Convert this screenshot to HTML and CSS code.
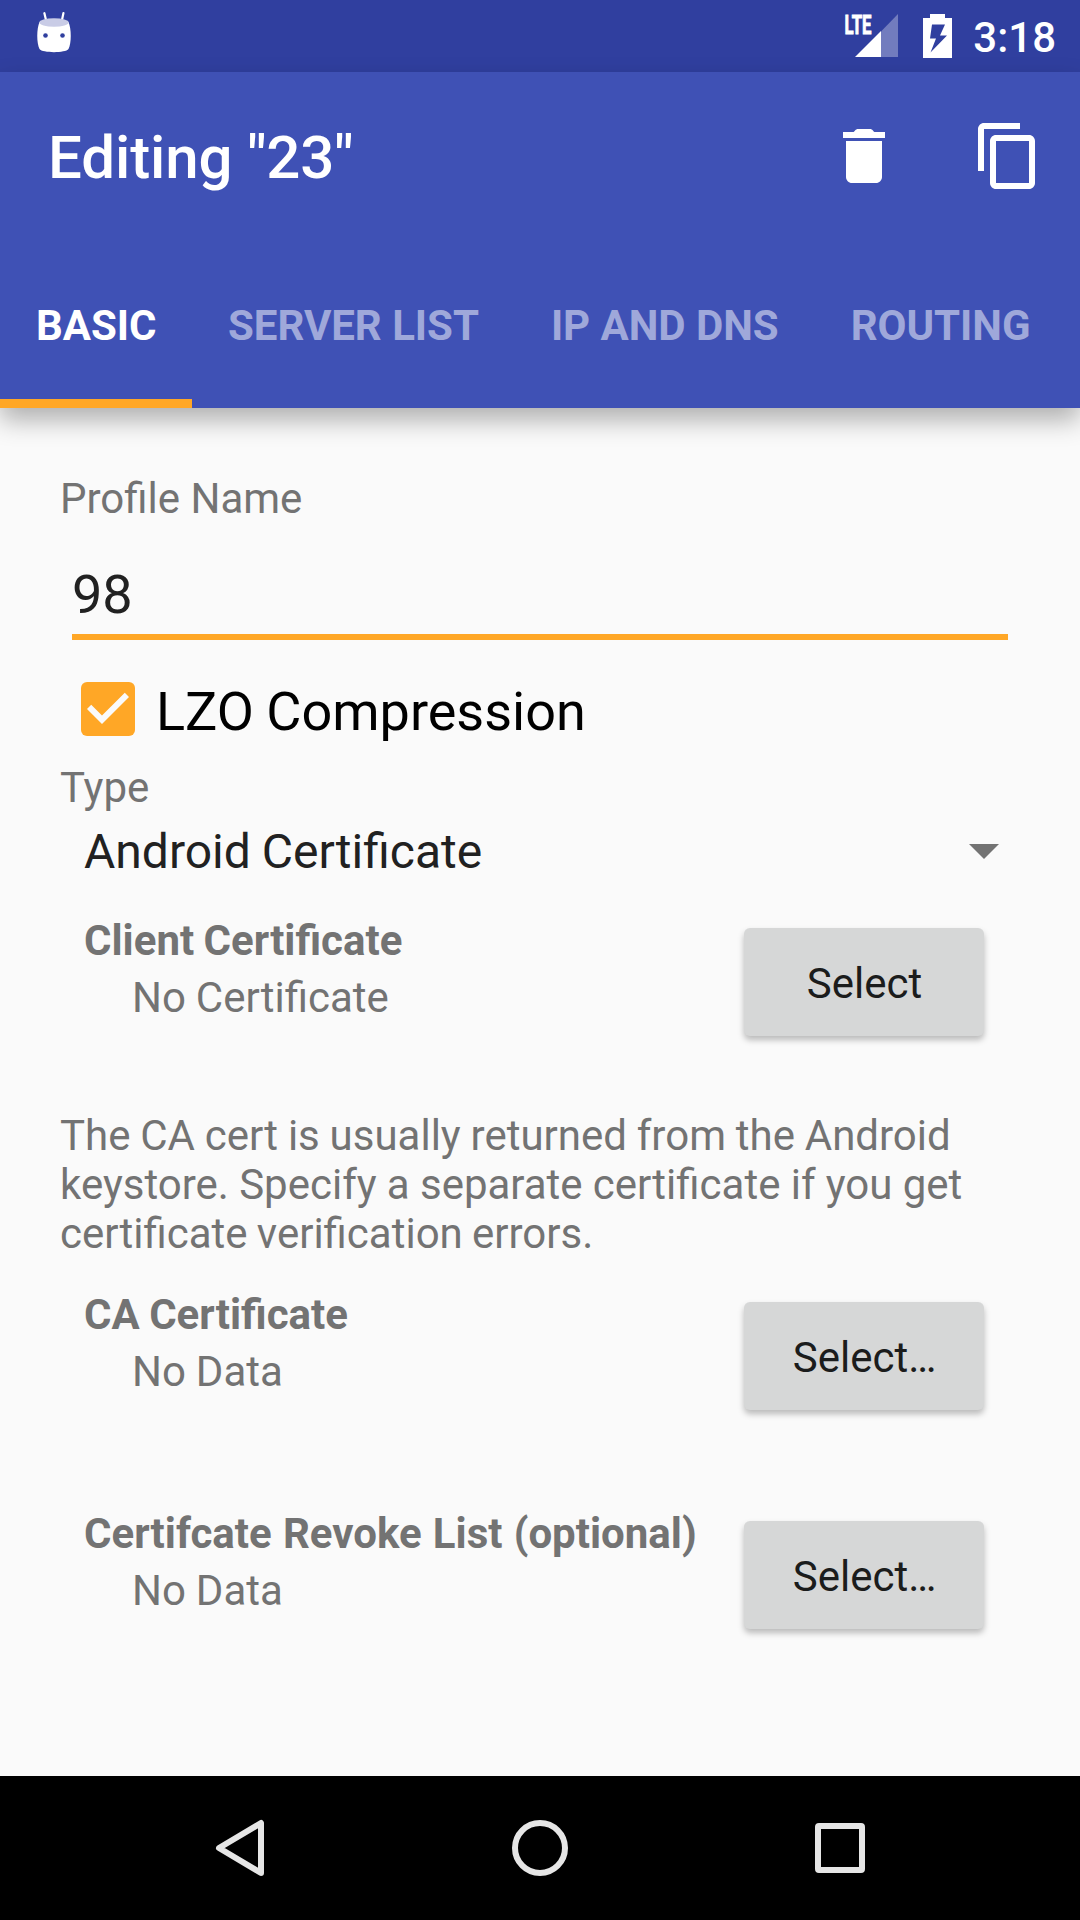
FILE: index.html
```html
<!DOCTYPE html>
<html lang="en">
<head>
<meta charset="utf-8">
<title>Editing "23"</title>
<link rel="stylesheet" href="styles.css">
</head>
<body>
<div class="screen">
  <header class="status-bar">
    <svg class="robot" width="34" height="42" viewBox="0 0 34 42">
      <path d="M7.4 1.2L9 8M26.4 1.2L25 8" stroke="#fff" stroke-width="2.2" stroke-linecap="round"/>
      <path fill="#fff" d="M2.5 10C6 15.300 28 15.300 31.500 10C34.500 17 34.500 31 31.500 37C28.500 41.200 5.500 41.200 2.500 37C-.5 31-.5 17 2.500 10z"/>
      <ellipse cx="17" cy="10.500" rx="14.800" ry="4.200" fill="#c9cce6"/>
      <circle cx="8.500" cy="23.500" r="2.300" fill="#303f9f"/>
      <circle cx="25.500" cy="23.500" r="2.300" fill="#303f9f"/>
    </svg>
    <div class="status-icons">
      <svg class="signal" width="56" height="54" viewBox="0 -10 56 54">
        <path fill="#fff" fill-opacity=".32" d="M38 17.500L55 0V43H38z"/>
        <path fill="#fff" d="M12 43L38 17V43z"/>
        <text class="lte" x="1.500" y="19.500" textLength="27" lengthAdjust="spacingAndGlyphs">LTE</text>
      </svg>
      <svg class="battery" width="29" height="44" viewBox="0 0 29 44">
        <path fill="#fff" fill-rule="evenodd" d="M7 0H22V4H29V44H0V4H7zM9 10.500L7 24.500H13L7.500 38.500L24 21.500H17L22 10.500z"/>
      </svg>
      <span class="clock">3:18</span>
    </div>
  </header>

  <div class="app-bar">
    <div class="toolbar">
      <h1 class="title">Editing "23"</h1>
      <svg class="action" viewBox="0 0 24 24"><path d="M6 19c0 1.100.9 2 2 2h8c1.100 0 2-.9 2-2V7H6v12zM19 4h-3.500c-.5-.2-.6-1-1.500-1h-4c-.9 0-1 .8-1.500 1H5v2h14V4z"/></svg>
      <svg class="action" viewBox="0 0 24 24"><path d="M16 1H4c-1.100 0-2 .9-2 2v14h2V3h12V1zm3 4H8c-1.100 0-2 .9-2 2v14c0 1.100.9 2 2 2h11c1.100 0 2-.9 2-2V7c0-1.100-.9-2-2-2zm0 16H8V7h11v14z"/></svg>
    </div>
    <nav class="tabs">
      <span class="tab active">BASIC</span>
      <span class="tab">SERVER LIST</span>
      <span class="tab">IP AND DNS</span>
      <span class="tab">ROUTING</span>
    </nav>
  </div>

  <main class="content">
    <div class="label">Profile Name</div>
    <div class="edit-text">98</div>
    <div class="check-row">
      <svg class="checkbox" width="54" height="54" viewBox="3 3 18 18">
        <rect x="3" y="3" width="18" height="18" rx="2" fill="#ffa726"/>
        <path fill="#fafafa" d="M10 17l-5-5 1.410-1.410L10 14.170l7.590-7.590L19 8z"/>
      </svg>
      <span>LZO Compression</span>
    </div>
    <div class="label type">Type</div>
    <div class="spinner">
      <span>Android Certificate</span>
      <svg width="30" height="15" viewBox="0 0 30 15"><path fill="#737373" d="M0 0H30L15 15z"/></svg>
    </div>
    <section class="cert-row">
      <div class="cert-info">
        <div class="cert-title">Client Certificate</div>
        <div class="cert-value">No Certificate</div>
      </div>
      <div class="button">Select</div>
    </section>
    <p class="note"><span class="line-1">The CA cert is usually returned from the Android</span> <span class="line-2">keystore. Specify a separate certificate if you get</span> <span class="line-3">certificate verification errors.</span></p>
    <section class="cert-row">
      <div class="cert-info">
        <div class="cert-title">CA Certificate</div>
        <div class="cert-value">No Data</div>
      </div>
      <div class="button">Select…</div>
    </section>
    <section class="cert-row revoke">
      <div class="cert-info">
        <div class="cert-title">Certifcate Revoke List (optional)</div>
        <div class="cert-value">No Data</div>
      </div>
      <div class="button">Select…</div>
    </section>
  </main>

  <footer class="nav-bar">
    <svg width="60" height="60" viewBox="0 0 60 60"><path d="M51 5V55L9 30z"/></svg>
    <svg width="60" height="60" viewBox="0 0 60 60"><circle cx="30" cy="30" r="25"/></svg>
    <svg width="60" height="60" viewBox="0 0 60 60"><rect x="8" y="8" width="44" height="44" rx="1"/></svg>
  </footer>
</div>
</body>
</html>
```
FILE: styles.css
```css
* { box-sizing: border-box; }

body {
  margin: 0;
  font-family: Roboto, sans-serif;
  font-size: 42px;
  line-height: 49px;
  color: #737373;
  background: #fafafa;
}

.screen {
  display: flex;
  flex-direction: column;
  width: 1080px;
  height: 1920px;
  overflow: hidden;
}

.status-bar {
  display: flex;
  justify-content: space-between;
  align-items: flex-start;
  height: 72px;
  padding: 12px 24px 0 37px;
  background: #303f9f;
}

.status-icons { display: flex; align-items: flex-start; }
.signal { margin: -8px 24px 0 0; }
.battery { margin: 2px 21px 0 0; }
.lte { font-size: 26px; font-weight: 700; fill: #fff; stroke: #fff; stroke-width: .9px; }
.clock { font-weight: 500; color: #fff; margin-top: 1px; }

.app-bar {
  display: flex;
  flex-direction: column;
  justify-content: space-between;
  height: 336px;
  background: #3f51b5;
  box-shadow: 0 12px 24px rgba(0, 0, 0, .3);
}

.toolbar {
  display: flex;
  align-items: center;
  height: 168px;
  padding: 0 36px 0 48px;
}

.title {
  flex: 1;
  margin: 0;
  padding-top: 3px;
  font-size: 60px;
  line-height: 71px;
  font-weight: 500;
  letter-spacing: -.1px;
  color: #fff;
}

.action { width: 72px; height: 72px; margin-left: 72px; fill: #fff; }

.tabs { display: flex; height: 144px; }

.tab {
  padding: 37px 36px 0;
  border-bottom: 9px solid transparent;
  font-weight: 700;
  letter-spacing: -.04px;
  color: #9fa8da;
  white-space: nowrap;
}

.tab.active { width: 192px; color: #fff; border-color: #ffa726; }

.content { flex: 1; padding: 66px 60px 0; }

.edit-text {
  margin: 40px 12px 0;
  padding-bottom: 8px;
  border-bottom: 6px solid #ffa726;
  font-size: 54px;
  line-height: 63px;
  color: #212121;
}

.check-row {
  display: flex;
  gap: 21px;
  margin: 40px 0 0 21px;
  font-size: 54px;
  line-height: 63px;
  word-spacing: -1px;
  color: #000;
}

.checkbox { margin-top: 2px; }

.type { margin-top: 20px; }

.spinner {
  display: flex;
  align-items: center;
  justify-content: space-between;
  margin: 11px 21px 0 24px;
  font-size: 48px;
  line-height: 57px;
  word-spacing: -1px;
  color: #212121;
}

.cert-row {
  display: flex;
  justify-content: space-between;
  align-items: flex-end;
  height: 120px;
  margin: 36px 36px 0 24px;
}

.cert-info { align-self: flex-start; white-space: nowrap; }
.cert-title { font-weight: 700; word-spacing: -1px; }
.cert-value { margin: 8px 0 0 48px; word-spacing: -.5px; }

.button {
  width: 240px;
  height: 108px;
  padding-left: 1px;
  border-radius: 6px;
  background: #d6d7d7;
  color: #1b1c1c;
  line-height: 112px;
  text-align: center;
  box-shadow: 0 4px 6px rgba(0, 0, 0, .26);
}

.note { margin: 75px 0 -4px; }
.line-1 { word-spacing: -.6px; }
.line-2 { word-spacing: -.17px; }
.line-3 { word-spacing: -1.2px; }
.revoke { margin-top: 99px; }
.revoke .cert-title { word-spacing: .8px; }

.nav-bar {
  display: flex;
  justify-content: center;
  align-items: center;
  gap: 240px;
  height: 144px;
  background: #000;
}

.nav-bar svg {
  fill: none;
  stroke: #e6e6e6;
  stroke-width: 6;
  stroke-linejoin: round;
}
```
